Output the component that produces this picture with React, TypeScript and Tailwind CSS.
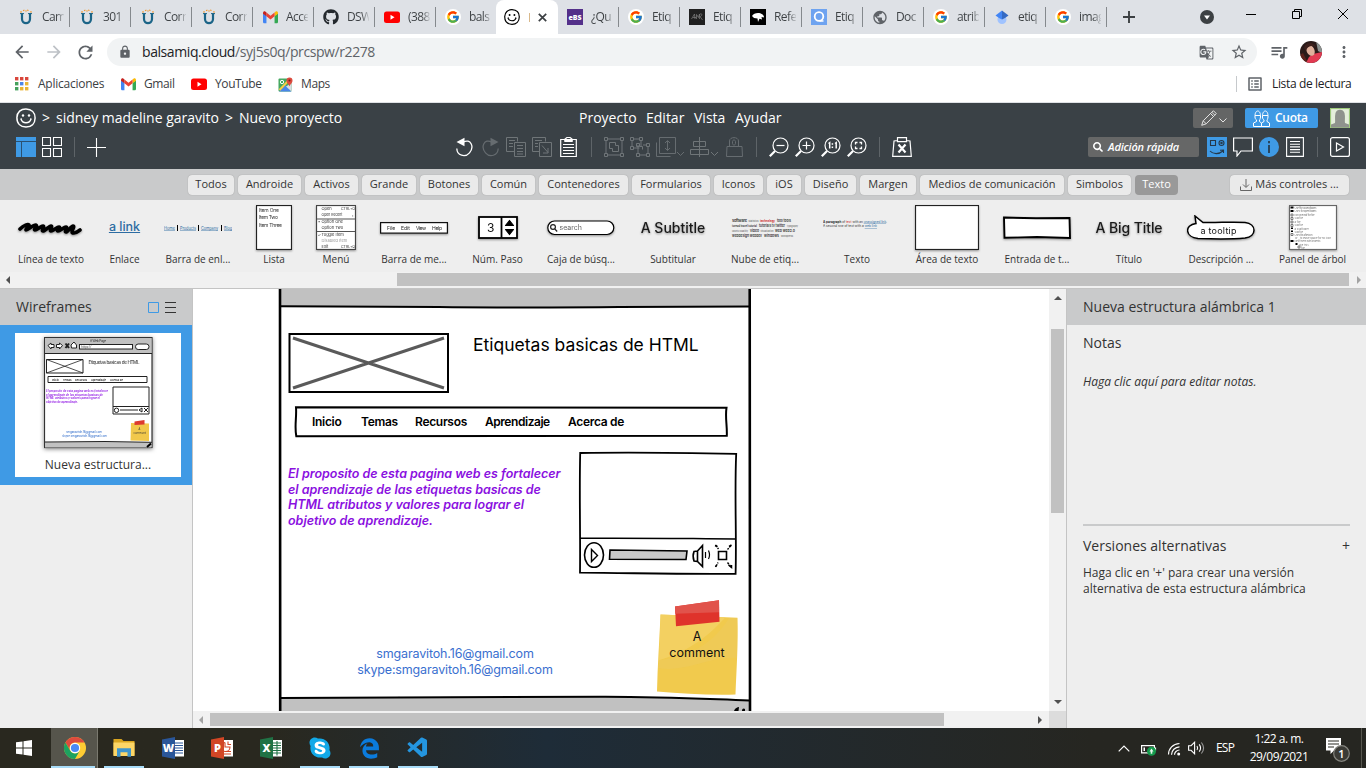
import type { ReactNode } from "react";
import { FaGithub, FaSkype, FaEdgeLegacy, FaSearch } from "react-icons/fa";
import { FcGoogle } from "react-icons/fc";
import {
  MdArrowBack,
  MdArrowForward,
  MdRefresh,
  MdLock,
  MdGTranslate,
  MdStarBorder,
  MdQueueMusic,
  MdMoreVert,
  MdOutlineListAlt,
  MdPublic,
} from "react-icons/md";
import { VscVscode } from "react-icons/vsc";

type IconProps = { w?: number; h?: number; box?: string; className?: string; children: ReactNode };

function Icon({ w = 16, h = 16, box, className = "", children }: IconProps) {
  return (
    <svg
      width={w}
      height={h}
      viewBox={box ?? `0 0 ${w} ${h}`}
      fill="none"
      stroke="currentColor"
      strokeWidth="1.2"
      className={`block shrink-0 ${className}`}
    >
      {children}
    </svg>
  );
}

/* ---------- Browser chrome ---------- */

const UIcon = () => (
  <Icon>
    <path d="M4 4.500v5.500c0 5.500 8 5.500 8 0V4.500" stroke="#1b6487" strokeWidth="2.200" />
    <path d="M2 4.600h4M10 4.600h4" stroke="#1b6487" strokeWidth="1" />
    <path d="M2.500 2.500l1 .8M5.500 .8l.5 1M10 .8l-.4 1M13.500 2.500l-1 .8M8 1.500v1" stroke="#f29527" strokeWidth="1.500" />
  </Icon>
);
const GmailIcon = () => (
  <Icon w={15} h={15} box="0 0 24 24" className="my-px">
    <g stroke="none">
      <path d="M0 5v14c0 1 .8 2 2 2h3.500V9L0 5z" fill="#4285f4" />
      <path d="M18.500 9v12H22c1.200 0 2-1 2-2V5l-5.500 4z" fill="#34a853" />
      <path d="M18.500 4v6L24 6V5c0-2.500-2.500-3.500-4-2.300L18.500 4z" fill="#fbbc04" />
      <path d="M5.500 10V4L12 9l6.500-5v6L12 15 5.500 10z" fill="#ea4335" />
      <path d="M0 5v1l5.500 4V4L4 2.700C2.500 1.500 0 2.500 0 5z" fill="#c5221f" />
    </g>
  </Icon>
);
const YouTubeIcon = () => (
  <Icon w={16} h={16}>
    <rect x="0" y="2.500" width="16" height="11.500" rx="2.500" fill="#f00" stroke="none" />
    <path d="M6.500 5.800v5l4-2.500z" fill="#fff" stroke="none" />
  </Icon>
);
const GoogleIcon = () => (
  <span className="flex size-4 items-center justify-center rounded-full bg-white">
    <FcGoogle size={14} />
  </span>
);
const Smile = ({ size = 16, className = "" }: { size?: number; className?: string }) => (
  <Icon w={size} h={size} box="0 0 20 20" className={className}>
    <path d="M10 .9C5 .8 1 4 .9 9.500.8 15.500 4.500 19 10 19.100c5.500 0 9-3.600 9.100-9.100C19.200 4.500 15.500 1.200 10 .9z" strokeWidth="1.500" />
    <path d="M5 11c1.500 5 8.500 5 10 0" strokeWidth="1.400" />
    <path d="M4.600 11.200l1-.6M14.400 10.600l1 .6" />
    <circle cx="7" cy="7.500" r="1.200" fill="currentColor" stroke="none" />
    <circle cx="13" cy="7.500" r="1.200" fill="currentColor" stroke="none" />
  </Icon>
);
const EbsIcon = () => (
  <span className="flex size-4 items-center justify-center bg-[#54308a] text-[7px] font-black leading-none text-white">eBS</span>
);
const DarkIcon = () => (
  <Icon>
    <rect width="16" height="16" fill="#202020" stroke="none" />
    <path d="M2.500 10l3-5 .5 5M4 8.500h3M7.500 10V5.500l2 3 1-3.500v5M11 5c3-1 2 2.500 0 2.500l2.500 3.500" stroke="#808080" strokeWidth=".7" />
  </Icon>
);
const DinoIcon = () => (
  <Icon>
    <rect width="16" height="16" fill="#000" stroke="none" />
    <path d="M2 7c1-2 3.500-3 6-3 3 0 6 1.500 6 4.500L11.500 8l.5 2.500-2.500-.8L8 13 7.500 9.500 4 9z" fill="#fff" stroke="none" />
  </Icon>
);
const QIcon = () => (
  <Icon>
    <rect width="16" height="16" fill="#6ea3f0" stroke="none" />
    <circle cx="8" cy="7.500" r="4.300" stroke="#fff" strokeWidth="1.800" />
    <path d="M8.500 12h4" stroke="#fff" strokeWidth="1.500" />
  </Icon>
);
const ScholarIcon = () => (
  <Icon>
    <circle cx="8" cy="10.500" r="4.500" fill="#a0c3ff" stroke="none" />
    <path d="M1.500 6.500L8 1.500v9L5 9z" fill="#4285f4" stroke="none" />
    <path d="M14.500 6.500L8 1.500v9L11 9z" fill="#356ac3" stroke="none" />
  </Icon>
);

const leftTabs: [ReactNode, string][] = [
  [<UIcon />, "Cam"],
  [<UIcon />, "301"],
  [<UIcon />, "Corr"],
  [<UIcon />, "Corr"],
  [<GmailIcon />, "Acce"],
  [<FaGithub size={16} color="#24292e" />, "DSW"],
  [<YouTubeIcon />, "(388"],
  [<GoogleIcon />, "bals"],
];
const rightTabs: [ReactNode, string][] = [
  [<EbsIcon />, "¿Qu"],
  [<GoogleIcon />, "Etiq"],
  [<DarkIcon />, "Etiq"],
  [<DinoIcon />, "Refe"],
  [<QIcon />, "Etiq"],
  [<MdPublic size={17} color="#5f6368" />, "Doc"],
  [<GoogleIcon />, "atrib"],
  [<ScholarIcon />, "etiq"],
  [<GoogleIcon />, "imag"],
];

function Tab({ icon, label, last = false }: { icon: ReactNode; label: string; last?: boolean }) {
  return (
    <div className="flex h-full w-[61px] shrink-0 items-center pl-[9px]">
      <span className="flex w-4 shrink-0 justify-center">{icon}</span>
      <span className="ml-2 w-[22px] overflow-hidden whitespace-nowrap bg-linear-to-r from-[#3c4043] from-65% to-[#3c404320] bg-clip-text text-[12px] tracking-[-0.6px] text-transparent">
        {label}
      </span>
      {!last && <span className="ml-auto h-5 w-px bg-[#85898d]" />}
    </div>
  );
}

function TabStrip() {
  return (
    <div className="flex h-[34px] items-center bg-[#dee1e6] pl-[9px]">
      {leftTabs.map(([icon, label], i) => (
        <Tab key={i} icon={icon} label={label} last={i === 7} />
      ))}
      <div className="-ml-px flex h-full w-[62px] shrink-0 items-center rounded-t-lg bg-white pl-2 text-black">
        <Smile size={16} />
        <span className="ml-[9px] h-[9px] w-px bg-[#d9b98c]" />
        <Icon w={9} h={9} className="ml-2 text-[#3c4043]">
          <path d="M.8.8l7.400 7.400M8.200.8L.8 8.200" strokeWidth="1.700" />
        </Icon>
      </div>
      {rightTabs.map(([icon, label], i) => (
        <Tab key={i} icon={icon} label={label} />
      ))}
      <Icon w={12} h={12} className="ml-[16px] text-[#3c4043]">
        <path d="M6 0v12M0 6h12" strokeWidth="1.900" />
      </Icon>
      <Icon w={14} h={14} className="ml-[65px]">
        <circle cx="7" cy="7" r="7" fill="#3c4043" stroke="none" />
        <path d="M4 5.500h6L7 9.500z" fill="#fff" stroke="none" />
      </Icon>
      <Icon w={10} h={10} className="-mt-1.5 ml-[32px] text-black">
        <path d="M0 5.500h10" strokeWidth="1" />
      </Icon>
      <Icon w={10} h={10} className="-mt-1.5 ml-[36px] text-black">
        <path d="M.5 2.500h7v7h-7zM2.500 2.500V.5h7v7h-2" strokeWidth="1" />
      </Icon>
      <Icon w={10} h={10} className="-mt-1.5 ml-[36px] text-black">
        <path d="M0 0l10 10M10 0L0 10" strokeWidth="1" />
      </Icon>
    </div>
  );
}

function AddressBar() {
  return (
    <div className="flex h-9 items-center bg-white text-[#5f6368]">
      <MdArrowBack size={20} className="ml-3" />
      <MdArrowForward size={20} className="ml-3 text-[#bdc1c6]" />
      <MdRefresh size={21} className="ml-[11px]" />
      <div className="ml-[11px] flex h-7 w-[1150px] items-center rounded-full bg-[#f1f3f4]">
        <MdLock size={14} className="ml-[11px]" />
        <span className="mb-0.5 ml-[10px] text-[14px] tracking-[-0.42px]">
          <span className="text-[#202124]">balsamiq.cloud</span>/syj5s0q/prcspw/r2278
        </span>
        <MdGTranslate size={15} className="ml-auto" />
        <MdStarBorder size={18} className="ml-4 mr-[9px]" />
      </div>
      <MdQueueMusic size={20} className="ml-3" />
      <Icon w={22} h={22} className="ml-[11px]">
        <defs>
          <clipPath id="avatar">
            <circle cx="11" cy="11" r="11" />
          </clipPath>
        </defs>
        <g clipPath="url(#avatar)" stroke="none">
          <rect width="22" height="22" fill="#2a1a19" />
          <path d="M16 0h6v12l-4-2z" fill="#8c9391" />
          <path d="M0 14l3-2 5 10H0z" fill="#5b221c" />
          <path d="M9 16l4-3 9-2v11H6z" fill="#e23a52" />
          <ellipse cx="10.500" cy="9.500" rx="3.900" ry="5.600" fill="#e0b09c" transform="rotate(-25 10.500 9.500)" />
          <path d="M4 7c1-6 9-7 12-1-4-2-9-1-10 4z" fill="#3d211d" />
        </g>
      </Icon>
      <MdMoreVert size={18} className="ml-[13px]" />
    </div>
  );
}

function Bookmarks() {
  const colors = ["#d9473c", "#d9473c", "#d9473c", "#45a05c", "#4c85e8", "#eab434", "#45a05c", "#eab434", "#eab434"];
  return (
    <div className="flex h-[33px] items-start border-b border-[#dfe1e5] bg-white pt-[5px] text-[12px] text-[#3c4043]">
      <div className="flex h-[18px] w-full items-center">
        <Icon w={14} h={14} className="ml-[15px]">
          {colors.map((c, i) => (
            <rect key={i} x={(i % 3) * 5} y={Math.floor(i / 3) * 5} width="3.400" height="3.400" fill={c} stroke="none" />
          ))}
        </Icon>
        <span className="ml-[9px] w-[66px] tracking-[-0.25px]">Aplicaciones</span>
        <span className="ml-[17px]"><GmailIcon /></span>
        <span className="ml-[8px] w-[31px] tracking-[-0.4px]">Gmail</span>
        <span className="ml-4"><YouTubeIcon /></span>
        <span className="ml-2 w-[46px] tracking-[-0.4px]">YouTube</span>
        <Icon w={15} h={15} className="ml-[17px]">
          <rect x=".5" y="1.500" width="13" height="13" rx="1" fill="#45a860" stroke="none" />
          <path d="M1 14.500L7.500 8l6 6.500z" fill="#4a86e8" stroke="none" />
          <path d="M12 2L1.500 13" stroke="#f6ce46" strokeWidth="2" />
          <path d="M8 9.500l5.500 5V6z" fill="#d9dee3" stroke="none" />
          <circle cx="4" cy="5" r="1.700" stroke="#fff" strokeWidth="1" />
          <path d="M11.500 9.500C11 7 8.500 6.500 8.500 3.500a3 3 0 016 0c0 3-2.500 3.500-3 6z" fill="#dd4b3e" stroke="none" />
          <circle cx="11.500" cy="3.500" r="1" fill="#7b1f18" stroke="none" />
        </Icon>
        <span className="ml-2 tracking-[-0.4px]">Maps</span>
        <span className="ml-auto h-4 w-px bg-[#c6c9cc]" />
        <MdOutlineListAlt size={18} className="ml-[9px] text-[#5f6368]" />
        <span className="ml-[8px] mr-[15px] w-[79px] whitespace-nowrap tracking-[-0.35px] text-[#202124]">Lista de lectura</span>
      </div>
    </div>
  );
}

/* ---------- Balsamiq header ---------- */

const Sep = ({ className = "" }: { className?: string }) => <span className={`h-5 w-px shrink-0 bg-[#5e6468] ${className}`} />;

const Magnifier = ({ children, className }: { children: ReactNode; className: string }) => (
  <Icon w={20} h={20} className={className}>
    <circle cx="11.500" cy="8.500" r="7.500" strokeWidth="1.200" />
    <path d="M6 14L.8 19.200" strokeWidth="2.200" />
    {children}
  </Icon>
);

function AppHeader() {
  return (
    <div className="flex h-[66px] flex-col bg-[#3a4146] text-[14px] text-white">
      <div className="flex h-[30px] items-center">
        <Smile size={20} className="ml-4" />
        <div className="-mt-0.5 flex whitespace-nowrap">
          <span className="ml-[6px] w-2">&gt;</span>
          <span className="ml-[6px] w-[163px]">sidney madeline garavito</span>
          <span className="ml-[6px] w-2">&gt;</span>
          <span className="ml-[6px] w-[103px] tracking-[-0.05px]">Nuevo proyecto</span>
          <span className="ml-[237px] w-[57px]">Proyecto</span>
          <span className="ml-[10px] w-[38px]">Editar</span>
          <span className="ml-[10px] w-[31px]">Vista</span>
          <span className="ml-[10px] w-[47px]">Ayudar</span>
        </div>
        <div className="ml-auto flex h-5 w-10 items-center rounded-xs bg-[#646565] pl-2 text-[#e4e4e4]">
          <Icon w={16} h={16}>
            <path d="M.7 15.300l1.500-4.500L10.800 2.200l3 3L5.200 13.800zM2.200 10.800l3 3M9.500 3.500l3 3M10.800 2.200L12.500.8 15.200 3.500l-1.400 1.700" strokeWidth="1" />
          </Icon>
          <Icon w={8} h={5} className="ml-[2px] mt-1">
            <path d="M.5.5L4 4 7.500.5" strokeWidth="1" />
          </Icon>
        </div>
        <div className="ml-3 flex h-5 w-[73px] items-center rounded-xs bg-[#3f9ae5] pl-2 text-[12px] font-semibold">
          <Icon w={17} h={17}>
            <g strokeWidth="1">
              <path d="M2 7c-.5-8 6-8 5.500 0-.3 2-.5 2.500-1 3M2 7c0 1.500.7 2.500 1.500 3v1.500L.5 13v3.500h8V13l-2-1.500V10M2 5.500h5.500" />
              <path d="M9.500 7c-.5-8 6-8 5.500 0-.3 2-.5 2.500-1 3M9.500 7c0 1.500.7 2.500 1.500 3v1.500L8.500 13v3.500h8V13l-2.500-1.500V10M9.500 5.500H15" />
            </g>
          </Icon>
          <span className="ml-[5px] tracking-[-0.3px]">Cuota</span>
        </div>
        <Icon w={20} h={20} className="ml-3 mr-4">
          <rect x=".5" y=".5" width="19" height="19" fill="#e5eedb" stroke="#9dc97a" />
          <path d="M5 15c.5-2-.5-6 .5-10 1-4.500 8-4.500 9 0 1 4 0 8 .5 10l4 1.500v3H1v-3z" fill="#8f928d" stroke="none" />
        </Icon>
      </div>
      <div className="flex h-7 items-center">
        <Icon w={20} h={20} className="ml-4">
          <rect width="20" height="20" fill="#3f9ae5" stroke="none" />
          <path d="M0 4.500h20M5.500 5v15" stroke="#2a5172" strokeWidth="1" />
        </Icon>
        <Icon w={20} h={20} className="ml-[6px]">
          <path d="M.5.500h8v8h-8zM11.500.5h8v8h-8zM.5 11.500h8v8h-8zM11.500 11.500h8v8h-8z" strokeWidth="1.100" />
        </Icon>
        <Sep className="ml-3" />
        <Icon w={19} h={19} className="ml-3">
          <path d="M9.500 0v19M0 9.500h19" strokeWidth="1.100" />
        </Icon>
        <Icon w={17} h={20} className="ml-[350px]">
          <path d="M7 5.200C15 .8 18.500 10 13.500 15.800 9 21 1 18.500.8 11.500" strokeWidth="1.300" />
          <path d="M.5 5L8.500.8v8.400z" fill="currentColor" stroke="none" />
        </Icon>
        <Icon w={17} h={20} className="ml-[9px] text-[#666c70]">
          <path d="M10 5.200C2 .8-1.500 10 3.500 15.800 8 21 16 18.500 16.200 11.500" strokeWidth="1.200" />
          <path d="M16.500 5L8.500.8v8.400z" fill="currentColor" stroke="none" />
        </Icon>
        <Icon w={20} h={20} className="ml-[7px] text-[#6f7578]">
          <path d="M8 14.500H.5V.5h11v4M8.500 5.500h11v14h-11zM3 3.500h6M3 6.500h4M3 9.500h4M11 8.500h6M11 11.500h6M11 14.500h6M11 17h6" strokeWidth="1" />
        </Icon>
        <Icon w={20} h={20} className="ml-[6px] text-[#6f7578]">
          <path d="M7 14.500H.5V.5h13v4M7.500 5.500h12v14h-12zM3 3.500h7M3 6.500h3M3 9.500h3M10 8.500l6 7M16 11v5h-5" strokeWidth="1" />
        </Icon>
        <Icon w={17} h={20} className="ml-[8px]">
          <path d="M5 2.500H.7v17h15.600v-17H12M5 4V2l2-1.500h3L12 2v2zM3 7.500h11M3 10.500h11M3 13.500h11M3 16.500h11" strokeWidth="1.200" />
          <path d="M5 2.500h7v2H5z" fill="currentColor" />
        </Icon>
        <Sep className="ml-[14px]" />
        <Icon w={20} h={20} className="ml-3 text-[#6f7578]">
          <path d="M.5.500h3v3h-3zM16.500.5h3v3h-3zM.5 16.500h3v3h-3zM16.500 16.500h3v3h-3zM4 2h12M4 18h12M2 4v12M18 4v12M5.500 5.500h6v3h3v6h-6v-3h-3z" strokeWidth="1" />
        </Icon>
        <Icon w={20} h={20} className="ml-[6px] text-[#6f7578]">
          <path d="M.5.500h3v3h-3zM9.500.5h3v3h-3zM.5 9.500h3v3h-3zM9.500 9.500h3v3M16.500 6.500h3v3h-3zM6.500 16.500h3v3h-3zM16.500 16.500h3v3h-3zM4 2h5.500M2 4v5.500M11 4v5.500M4 11h5.500M13 8h3.500M8 8v8.500M10 18h6.500M18 10v6.500M6.500 6.500h3v3h-3z" strokeWidth="1" />
        </Icon>
        <Icon w={28} h={20} className="ml-[6px] text-[#666c70]">
          <path d="M3.500.5h16v16h-16zM.5 5.500v14h14M11.500 4v9.500M9 6l2.500-2.500L14 6M9 11l2.500 2.500L14 11M21 15l3.500 3.500L28 15" strokeWidth="1" />
        </Icon>
        <Icon w={28} h={20} className="ml-[6px] text-[#6f7578]">
          <path d="M9.500 0v20M3.500 4.500h12v5h-12zM.5 12.500h18v5H.5zM21 15l3.500 3.500L28 15" strokeWidth="1" />
        </Icon>
        <Icon w={17} h={20} className="ml-[8px] text-[#666c70]">
          <path d="M1 9.500h15l.5 10H.5zM3.500 9V4c0-4.500 9-4.500 9 0v5M6.500 4.500c0-2 3-2 3 0v2c0 2-3 2-3 0z" strokeWidth="1" />
        </Icon>
        <Sep className="ml-[13px]" />
        <Magnifier className="ml-3"><path d="M7.500 8.500h8" /></Magnifier>
        <Magnifier className="ml-[6px]"><path d="M7.500 8.500h8M11.500 4.500v8" /></Magnifier>
        <Magnifier className="ml-[6px]">
          <path d="M7.500 6.500l1.200-.8v5.800M14 6.500l1.200-.8v5.800M11.400 6.300v1.500M11.400 9.500V11" strokeWidth="1.500" />
        </Magnifier>
        <Magnifier className="ml-[6px]">
          <path d="M8.500 7.500v-2h2M12.500 5.500h2v2M14.500 9.500v2h-2M10.500 11.500h-2v-2" strokeWidth="1.300" />
        </Magnifier>
        <Sep className="ml-3" />
        <Icon w={20} h={20} className="ml-3">
          <path d="M5.500 3.500L2 4 .7 19.300h18.600L18 4l-3.500-.5M5.500.7h9v4h-9z" strokeWidth="1.200" />
          <path d="M6.500 7.500l7 8M13.500 7.500l-7 8" strokeWidth="2.200" />
        </Icon>
        <div className="ml-auto flex h-5 w-[111px] items-center rounded-xs bg-[#666767] pl-[5px] text-[11px] font-semibold italic">
          <FaSearch size={10} />
          <span className="ml-[5px] whitespace-nowrap tracking-[-0.15px]">Adición rápida</span>
        </div>
        <Icon w={20} h={20} className="ml-2">
          <rect width="20" height="20" fill="#3f9ae5" stroke="none" />
          <g stroke="#25384a" strokeWidth="1.100">
            <path d="M3.500 3.500h5v5h-5zM3 14c3 3.500 9 3.500 13 0M13 13.200l3.500-.2v3" />
            <circle cx="14.500" cy="6" r="2.500" />
            <circle cx="14.500" cy="6" r=".7" />
          </g>
        </Icon>
        <Icon w={20} h={20} className="ml-[6px]">
          <path d="M.6 1h18.800v13H8l-4 5v-5H.6z" />
        </Icon>
        <Icon w={20} h={20} className="ml-[6px]">
          <circle cx="10" cy="10" r="10" fill="#3f9ae5" stroke="none" />
          <path d="M10 8v8M10 4v2.200" stroke="#263c50" strokeWidth="1.800" />
        </Icon>
        <Icon w={18} h={20} className="ml-[7px]">
          <path d="M.6.600h16.800v18.800H.6zM4 4.500h10M4 7.200h10M4 9.900h10M4 12.600h10M4 15.300h10" strokeWidth="1.100" />
        </Icon>
        <Sep className="ml-[13px]" />
        <Icon w={20} h={20} className="ml-3 mr-4">
          <rect x=".6" y=".6" width="18.800" height="18.800" rx="2" />
          <path d="M6.500 6v8l7-4z" />
        </Icon>
      </div>
    </div>
  );
}

/* ---------- Control library ---------- */

const categories: [string, string][] = [
  ["Todos", "w-[46px]"],
  ["Androide", "w-[63px]"],
  ["Activos", "w-[53px]"],
  ["Grande", "w-[54px]"],
  ["Botones", "w-[58px]"],
  ["Común", "w-[53px]"],
  ["Contenedores", "w-[89px]"],
  ["Formularios", "w-[78px]"],
  ["Iconos", "w-[49px]"],
  ["iOS", "w-[34px]"],
  ["Diseño", "w-[51px]"],
  ["Margen", "w-[56px]"],
  ["Medios de comunicación", "w-[144px]"],
  ["Simbolos", "w-[63px]"],
  ["Texto", "w-[43px]"],
];

function Categories() {
  return (
    <div className="flex h-[31px] items-center gap-1 bg-[#c9cacb] pl-[188px] text-[11px] text-[#333]">
      {categories.map(([label, w]) => (
        <span
          key={label}
          className={`flex h-5 shrink-0 items-center justify-center whitespace-nowrap rounded-[4px] ${w} ${
            label === "Texto" ? "bg-[#999] text-white" : "bg-[#eaeaea] shadow-[0_0_1px_#888]"
          }`}
        >
          {label}
        </span>
      ))}
      <span className="ml-auto mr-[17px] flex h-5 w-[119px] items-center justify-center rounded-[4px] bg-[#eaeaea] shadow-[0_0_1px_#888]">
        <Icon w={12} h={12} className="mr-[3px] text-[#666]">
          <path d="M.5 7.500v4h11v-4M6 0v8M3 5.500l3 3 3-3" strokeWidth="1" />
        </Icon>
        Más controles ...
      </span>
    </div>
  );
}

const shadow = "drop-shadow-[0_1px_1px_rgba(0,0,0,0.4)]";
const sketch = "Inter, sans-serif";

const controls: { label: string; w: string; art: ReactNode }[] = [
  {
    label: "Línea de texto",
    w: "w-[68px]",
    art: (
      <Icon w={68} h={14} className={shadow}>
        <path
          d="M3 8c4-4 8-5 9-4s-4 4-3 5 8-6 10-5-3 5-1 5 6-4 8-4-2 5 0 5 6-5 8-5-2 5 0 5 6-4 8-4-3 4-1 4 6-4 8-4-2 5 0 5 5-6 7-6-1 4-1 6 4 1 8-2"
          stroke="#000"
          strokeWidth="3.600"
          strokeLinejoin="round"
          strokeLinecap="round"
        />
      </Icon>
    ),
  },
  { label: "Enlace", w: "w-[31px]", art: <span className="whitespace-nowrap font-['Inter'] text-[12.5px] font-medium text-[#2d6ca2] underline">a link</span> },
  {
    label: "Barra de enl...",
    w: "w-[68px]",
    art: (
      <Icon w={68} h={8}>
        <path d="M13.500 1v6M34.500 1v6M57.500 1v6" stroke="#000" strokeWidth="1" />
        <g fill="#2d6ca2" stroke="none" fontSize="4.500" fontFamily={sketch} textDecoration="underline">
          <text x="0" y="5.500" textLength="11" lengthAdjust="spacingAndGlyphs">Home</text>
          <text x="16" y="5.500" textLength="16" lengthAdjust="spacingAndGlyphs">Products</text>
          <text x="37" y="5.500" textLength="17" lengthAdjust="spacingAndGlyphs">Company</text>
          <text x="60" y="5.500" textLength="8" lengthAdjust="spacingAndGlyphs">Blog</text>
        </g>
      </Icon>
    ),
  },
  {
    label: "Lista",
    w: "w-[36px]",
    art: (
      <Icon w={36} h={45} className={shadow}>
        <rect x=".5" y=".5" width="35" height="44" fill="#fff" stroke="#222" />
        <g fill="#333" stroke="none" fontSize="5" fontFamily={sketch}>
          <text x="3" y="6.500" textLength="20">Item One</text>
          <text x="3" y="14" textLength="19">Item Two</text>
          <text x="3" y="21.500" textLength="23">Item Three</text>
        </g>
      </Icon>
    ),
  },
  {
    label: "Menú",
    w: "w-[40px]",
    art: (
      <Icon w={40} h={45} className={shadow}>
        <rect x=".5" y=".5" width="39" height="44" fill="#fff" stroke="#444" />
        <path d="M1 14h38M1 26.500h38" stroke="#555" />
        <g fill="#333" stroke="none" fontSize="4" fontFamily={sketch}>
          <text x="5.500" y="5.300">Open</text>
          <text x="25" y="5.300" textLength="14" lengthAdjust="spacingAndGlyphs">CTRL+O</text>
          <text x="5.500" y="11.300" textLength="21" lengthAdjust="spacingAndGlyphs">Open Recent</text>
          <text x="36" y="11.500">›</text>
          <text x="2" y="18">•</text>
          <text x="5.500" y="18">Option One</text>
          <text x="5.500" y="24">Option Two</text>
          <text x="1.500" y="31">✓</text>
          <text x="5.500" y="31">Toggle Item</text>
          <text x="5.500" y="36.800" fill="#999">Disabled Item</text>
          <text x="5.500" y="42.500">Exit</text>
          <text x="25" y="42.500" textLength="14" lengthAdjust="spacingAndGlyphs">CTRL+Q</text>
        </g>
      </Icon>
    ),
  },
  {
    label: "Barra de me...",
    w: "w-[68px]",
    art: (
      <Icon w={68} h={12} className={shadow}>
        <rect x=".6" y=".6" width="66.800" height="10.500" fill="#fff" stroke="#111" />
        <g fill="#222" stroke="none" fontSize="5" fontFamily={sketch}>
          <text x="7" y="7.500">File</text>
          <text x="21" y="7.500">Edit</text>
          <text x="36" y="7.500" textLength="10">View</text>
          <text x="52" y="7.500" textLength="10">Help</text>
        </g>
      </Icon>
    ),
  },
  {
    label: "Núm. Paso",
    w: "w-[51px]",
    art: (
      <Icon w={40} h={24} className={shadow}>
        <rect x="1" y="1" width="38" height="21" fill="#fff" stroke="#000" strokeWidth="1.800" />
        <path d="M23.500 1v21" stroke="#000" strokeWidth="1.800" />
        <path d="M31.500 4.500l4 5h-8zM31.500 18.500l4-5h-8z" fill="#000" stroke="#000" strokeLinejoin="round" />
        <text x="9" y="15.500" fontSize="12" fill="#111" stroke="none" fontFamily={sketch}>3</text>
      </Icon>
    ),
  },
  {
    label: "Caja de búsq...",
    w: "w-[68px]",
    art: (
      <Icon w={68} h={16} className={shadow}>
        <rect x=".8" y="1" width="66" height="13.500" rx="6.700" fill="#fff" stroke="#000" />
        <circle cx="6" cy="7" r="2.400" stroke="#222" />
        <path d="M7.800 9l2.400 2.500" stroke="#222" />
        <text x="12.500" y="10" fontSize="7" fill="#666" stroke="none" fontFamily={sketch}>search</text>
      </Icon>
    ),
  },
  { label: "Subtitular", w: "w-[68px]", art: <span className={`whitespace-nowrap font-['Inter'] text-[14px] font-medium text-[#1a1a1a] ${shadow}`}>A Subtitle</span> },
  {
    label: "Nube de etiq...",
    w: "w-[68px]",
    art: (
      <Icon w={68} h={22} box="0 0 68 22">
        <g fill="#333" stroke="none" fontSize="4" fontFamily={sketch} fontWeight="600">
          <text x="1" y="4.500" textLength="15">software</text>
          <text x="17.500" y="4.500" textLength="10" lengthAdjust="spacingAndGlyphs" fontSize="2.500" fill="#777">statistics</text>
          <text x="29" y="4.500" textLength="15" lengthAdjust="spacingAndGlyphs" fill="#c22" fontSize="3.500">technology</text>
          <text x="46" y="4.500" textLength="14" lengthAdjust="spacingAndGlyphs">tool tools</text>
          <text x="1" y="9.500" textLength="25" lengthAdjust="spacingAndGlyphs" fontSize="3.200">toread travel tutorial</text>
          <text x="28" y="9.500" textLength="26" lengthAdjust="spacingAndGlyphs">tutorials tv twitter</text>
          <text x="56" y="9.500" textLength="11" lengthAdjust="spacingAndGlyphs" fontSize="2.500" fill="#777">typography</text>
          <text x="1" y="14.500" textLength="16" lengthAdjust="spacingAndGlyphs" fontSize="2.600" fill="#777">ubuntu usability</text>
          <text x="19" y="14.500" textLength="9" lengthAdjust="spacingAndGlyphs">video</text>
          <text x="29.500" y="14.500" textLength="13" lengthAdjust="spacingAndGlyphs" fontSize="2.600" fill="#777">visualization</text>
          <text x="44" y="14.500" textLength="20" lengthAdjust="spacingAndGlyphs">web web2.0</text>
          <text x="1" y="19.500" textLength="30" lengthAdjust="spacingAndGlyphs">webdesign webdev</text>
          <text x="33" y="19.500" textLength="15" lengthAdjust="spacingAndGlyphs">windows</text>
          <text x="50" y="19.500" textLength="12" lengthAdjust="spacingAndGlyphs" fontSize="2.600" fill="#777">wordpress</text>
        </g>
      </Icon>
    ),
  },
  {
    label: "Texto",
    w: "w-[68px]",
    art: (
      <Icon w={68} h={24} box="0 0 68 24">
        <g fill="#333" stroke="none" fontSize="3.600" fontFamily={sketch}>
          <text x="0" y="6.500" textLength="64" lengthAdjust="spacingAndGlyphs">
            <tspan fontWeight="700">A paragraph</tspan> of <tspan fill="#c22">text</tspan> with an{" "}
            <tspan fill="#2d6ca2" textDecoration="underline">unassigned link</tspan>.
          </text>
          <text x="0" y="11" textLength="54" lengthAdjust="spacingAndGlyphs">
            A <tspan fontStyle="italic">second row</tspan> of text with a <tspan fill="#2d6ca2" textDecoration="underline">web link</tspan>
          </text>
        </g>
      </Icon>
    ),
  },
  {
    label: "Área de texto",
    w: "w-[64px]",
    art: (
      <Icon w={64} h={45} className={shadow}>
        <rect x=".5" y=".5" width="63" height="44" fill="#fff" stroke="#222" />
      </Icon>
    ),
  },
  {
    label: "Entrada de t...",
    w: "w-[68px]",
    art: (
      <Icon w={68} h={24} className={shadow}>
        <path d="M1 1.500l32 .8 33.500-.3.500 20-33-1-32.500.8z" fill="#fff" stroke="#000" strokeWidth="1.900" />
      </Icon>
    ),
  },
  { label: "Título", w: "w-[68px]", art: <span className={`whitespace-nowrap font-['Inter'] text-[14px] font-medium tracking-[-0.1px] text-[#1a1a1a] ${shadow}`}>A Big Title</span> },
  {
    label: "Descripción ...",
    w: "w-[68px]",
    art: (
      <Icon w={68} h={26} className={shadow}>
        <path d="M8 1l8 6.500c15 .5 28-1 42 0 12 1.500 12 14 0 15.500-15 1.500-32 1-47 .5C-2 22-3 10 9 8.500z" fill="#fff" stroke="#000" strokeWidth="1.500" />
        <text x="13.500" y="18.500" fontSize="9" fill="#111" stroke="none" fontFamily={sketch} textLength="36">a tooltip</text>
      </Icon>
    ),
  },
  {
    label: "Panel de árbol",
    w: "w-[67px]",
    art: (
      <Icon w={48} h={45} className={shadow}>
        <rect x=".5" y=".5" width="47" height="44" fill="#fff" stroke="#666" />
        <g fill="#777" stroke="none" fontSize="2.700" fontFamily={sketch}>
          <path d="M1.500 1.500h3v2h-3zM1.500 5h3v2h-3zM1.500 35h3v2h-3zM6.500 38h2v2h-2z" fill="#000" />
          <path d="M2 9h2v2H2zM2 12.500h2v2H2zM2 16h2v2H2zM2 19.500h2v2H2zM2 28.500h2v2H2zM9 41h2v2H9z" fill="#fff" stroke="#333" strokeWidth=".6" />
          <path d="M2 22.500h2v1.500H2zM2 25.500h2v1.500H2z" fill="#000" />
          <text x="5.500" y="3.500" textLength="22">Use f for closed folders</text>
          <text x="5.500" y="7" textLength="22">Use F for open folders</text>
          <text x="5.500" y="10.500" textLength="20">For lone leaf for file</text>
          <text x="5.500" y="14">subfile</text>
          <text x="5.500" y="17.500">a file</text>
          <text x="5.500" y="21">subfile</text>
          <text x="5.500" y="24.500">a subfolder</text>
          <text x="5.500" y="27.500">subfile</text>
          <text x="5.500" y="30.500" textLength="18">Use x for a file icon</text>
          <text x="6" y="34" textLength="36">or _ to leave space for no icon</text>
          <text x="5.500" y="37" textLength="26">Nest them with indents</text>
          <text x="10" y="40.500">like this</text>
          <text x="12" y="43.500">file</text>
        </g>
      </Icon>
    ),
  },
];

function Controls() {
  return (
    <div className="flex h-[72px] gap-6 bg-[#eee] pl-[17px]">
      {controls.map((c) => (
        <div key={c.label} className={`flex shrink-0 flex-col items-center ${c.w}`}>
          <div className="mt-[5px] flex h-[45px] items-center">{c.art}</div>
          <span className="mt-px whitespace-nowrap text-[10px] leading-4 text-[#333]">{c.label}</span>
        </div>
      ))}
    </div>
  );
}

const Arrow = ({ d, className = "" }: { d: string; className?: string }) => (
  <Icon w={8} h={8} className={className}>
    <path d={d} fill="currentColor" stroke="none" />
  </Icon>
);
const LEFT = "M6 0v8L2 4z";
const RIGHT = "M2 0v8l4-4z";
const UP = "M0 6h8L4 2z";
const DOWN = "M0 2h8L4 6z";

/* ---------- Panels ---------- */

function Thumbnail() {
  return (
    <Icon w={109} h={112} className="drop-shadow-[0_1px_2px_rgba(0,0,0,0.5)]">
      <rect x=".5" y=".5" width="107.500" height="110" fill="#fff" stroke="#333" />
      <path d="M1 1h106.500v15.500H1zM1 105h106.500v5.500H1z" fill="#c1c1c1" stroke="none" />
      <path d="M1 16.500h107M1 105l60-.5 47 .8" stroke="#222" strokeWidth="1" />
      <text x="46" y="4.800" fontSize="3.200" fill="#333" stroke="none" fontFamily={sketch} textLength="16">A Web Page</text>
      <g stroke="#222" fill="#fff" strokeWidth="1">
        <path d="M4 8.500l3-2.500v1.500h3v3H7V12zM18.500 8.500l-3-2.500v1.500h-3v3h3V12zM27 8l3-3 2.500 3v3h-5z" />
        <path d="M21.500 6.500l3.500 4.500M25 6.500l-3.500 4.500" strokeWidth="2" />
        <rect x="35.500" y="7.500" width="53" height="4.500" />
        <rect x="91.500" y="7" width="13.500" height="5.500" rx="2.700" />
        <path d="M2.500 22.500h36.500v13.500H2.500zM4 39.500h99v6H4zM69 50h36v27H69zM69 69.500h36" />
        <path d="M2.500 22.500L39 36M39 22.500L2.500 36" strokeWidth=".8" />
        <circle cx="72.500" cy="73.300" r="2.200" />
        <path d="M76 73h18M95 73l3-2v4zM100 71l4 4M104 71l-4 4" />
      </g>
      <text x="37" y="10.800" fontSize="3" fill="#333" stroke="none">https://</text>
      <text x="44.500" y="27" fontSize="4.600" fill="#222" stroke="none" fontFamily={sketch} textLength="51">Etiquetas basicas de HTML</text>
      <g fontSize="2.700" fontWeight="700" fill="#333" stroke="none" fontFamily={sketch}>
        <text x="8" y="43.500" textLength="7">Inicio</text>
        <text x="19" y="43.500" textLength="8.500">Temas</text>
        <text x="31" y="43.500" textLength="12">Recursos</text>
        <text x="47" y="43.500" textLength="15">Aprendizaje</text>
        <text x="66" y="43.500" textLength="13">Acerca de</text>
      </g>
      <g fontSize="2.800" fontWeight="700" fontStyle="italic" fill="#9a2be6" stroke="none" fontFamily={sketch}>
        <text x="2" y="55" textLength="62">El proposito de esta pagina web es fortalecer</text>
        <text x="2" y="58.600" textLength="57">el aprendizaje de las etiquetas basicas de</text>
        <text x="2" y="62.200" textLength="54">HTML atributos y valores para lograr el</text>
        <text x="2" y="65.800" textLength="32">objetivo de aprendizaje.</text>
      </g>
      <g fontSize="2.900" fill="#2a68c8" stroke="none" fontFamily={sketch}>
        <text x="22" y="96" textLength="36">smgaravitoh.16@gmail.com</text>
        <text x="18" y="99.500" textLength="45">skype:smgaravitoh.16@gmail.com</text>
      </g>
      <path d="M87 86l18 .5v17.500l-18.500-.5z" fill="#f1c84b" stroke="none" />
      <path d="M90.500 84.500l10-1.500v4.500l-10 .5z" fill="#dd3a2f" stroke="none" />
      <text x="94.500" y="92.500" fontSize="2.800" fill="#333" stroke="none">A</text>
      <text x="89.500" y="96.500" fontSize="2.800" fill="#333" stroke="none">comment</text>
      <path d="M103 110l4-3.500" stroke="#000" strokeWidth="2" />
    </Icon>
  );
}

function Sidebar() {
  return (
    <div className="flex w-[193px] shrink-0 flex-col border-r border-[#c4c4c4] bg-[#eee]">
      <div className="flex h-9 items-center bg-[#c9cacb] text-[#333]">
        <span className="mb-0.5 ml-4 text-[14px]">Wireframes</span>
        <Icon w={11} h={11} className="ml-auto text-[#3f9ae5]">
          <path d="M.5.500h10v10H.5z" strokeWidth="1" />
        </Icon>
        <Icon w={11} h={11} className="ml-[6px] mr-4">
          <path d="M0 .5h11M0 5.500h11M0 10.500h11" strokeWidth="1.100" />
        </Icon>
      </div>
      <div className="h-[160px] bg-[#3f9ae5] pl-[15px] pt-2">
        <div className="flex h-36 w-[166px] flex-col items-center bg-white pt-1">
          <Thumbnail />
          <span className="mt-[6px] text-[12px] leading-5 text-[#333]">Nueva estructura...</span>
        </div>
      </div>
    </div>
  );
}

function Wireframe() {
  return (
    <div className="relative h-[422px] overflow-hidden bg-white font-['Inter']">
      <Icon w={856} h={422} box="193 289 856 422" className="absolute left-0 top-0">
        <g stroke="#000" strokeWidth="2">
          <path d="M280 285h469v21.500l-130 .6c-80 0-130 .8-180 0l-159-.9z" fill="#c1c1c1" stroke="none" />
          <path d="M280 698c160-1.500 240-1 320-1.300 60-.2 90 1.600 149 3.800V715H280z" fill="#c1c1c1" stroke="none" />
          <path d="M280 306.200l159 .9c50 .8 120 .3 180 0l131-.7" />
          <path d="M280 698c160-1.500 240-1 320-1.300 60-.2 90 1.600 149 3.800" />
          <path d="M280 285c-.6 100 .6 200 .2 430M749.700 285c.6 130-.6 270 .3 430" strokeWidth="2.600" />
          <path d="M289.500 334h158.500v58H289.500z" />
          <path d="M293 338l151 50M444 338L293 388" stroke="#5a5a5a" strokeWidth="3" />
          <path d="M296 407.300l215 .2 215.500.3c-1.500 9 .8 18 .3 28l-211 .2-219.500.3c-2-10 .5-19-.3-29z" />
          <path d="M580.200 453c50-1 85-.6 156 .8-1.800 40 .5 80-.6 120-60 .5-100-.8-155.600-1.200.5-40-.8-80 .2-119.600z" strokeWidth="1.800" />
          <path d="M580 538.300c60-.5 100 .3 156 .7" strokeWidth="1.500" />
          <ellipse cx="594" cy="555" rx="9.500" ry="12.300" strokeWidth="1.600" />
          <path d="M591.500 549.500v12l6-6z" strokeWidth="1.400" />
          <path d="M610 550c25 .5 50 .5 77 1l-1 8.500c-25-.3-50-.3-76.500-.3z" fill="#c9c9c9" strokeWidth="1.600" />
          <path d="M694 551.500l3.500-.5 5-5.500v21l-5-5-3.500-.5c-1-3-1-7 0-9.500zM697.500 551v10.500" strokeWidth="1.600" />
          <path d="M705.500 552v6M708.500 550.500c1.300 3 1.300 6 0 8.500" strokeWidth="1.200" />
          <path d="M718.500 551.500h8v8h-8z" strokeWidth="1.600" />
          <path d="M715.500 545l3 4M731 545.500l-3.500 4M716 566.500l2-4M731 567l-3.500-4.500" strokeWidth="1.400" strokeDasharray="2.500 1" />
          <path d="M715 545.500l2.500 1M731.500 545l-2.500 1.500M715.500 567l1-2M728.500 565l3 2.500v-2.500" strokeWidth="1.500" />
        </g>
        <g stroke="none">
          <path d="M660.500 614.500l77 3.300c.8 25-1 52-2 76.700-26 .7-53-.8-78.500-3 .5-26 2.500-51 3.500-77z" fill="#f1ca4d" />
          <path d="M660.500 614.500l65 2.800c-20 22-40 35-66.500 43z" fill="#f3d36a" opacity=".7" />
          <path d="M658 668c30 5 50-12 79-10v-40h-8c-14 24-40 40-70 42z" fill="#eeca5a" opacity=".7" />
          <path d="M675 606.500l44-6.300.5 21.500-43.500 4.500z" fill="#df332b" />
          <path d="M675 606.500l44-6.300v12l-43.800 1.500z" fill="#e1534b" />
          <path d="M734 711c1-3 3.500-4 5-4l-.5 4zM742 711c0-3 2-3 3-2v2z" fill="#000" />
        </g>
      </Icon>
      <span className="absolute left-[280px] top-[44px] whitespace-nowrap text-[17.500px] leading-6 text-black">Etiquetas basicas de HTML</span>
      <div className="absolute left-[119px] top-[125px] flex whitespace-nowrap text-[12px] font-semibold leading-4 tracking-[-0.3px] text-black">
        <span className="w-[49px]">Inicio</span>
        <span className="w-[54px]">Temas</span>
        <span className="w-[70px]">Recursos</span>
        <span className="w-[83px] tracking-[-0.45px]">Aprendizaje</span>
        <span>Acerca de</span>
      </div>
      <p className="absolute left-[95px] top-[177px] whitespace-nowrap text-[12.500px] font-semibold italic leading-[15.700px] tracking-[-0.02px] text-[#8a10e0]">
        El proposito de esta pagina web es fortalecer
        <br />
        el aprendizaje de las etiquetas basicas de
        <br />
        HTML atributos y valores para lograr el
        <br />
        objetivo de aprendizaje.
      </p>
      <p className="absolute left-[162px] top-[357px] w-[200px] whitespace-nowrap text-center text-[12.500px] leading-4 tracking-[-0.15px] text-[#3a6fcf]">
        smgaravitoh.16@gmail.com
        <br />
        skype:smgaravitoh.16@gmail.com
      </p>
      <p className="absolute left-[469px] top-[340px] w-[70px] text-center text-[12.500px] leading-4 text-[#111]">
        A
        <br />
        comment
      </p>
    </div>
  );
}

function Inspector() {
  return (
    <div className="flex w-[300px] shrink-0 flex-col border-l border-[#c4c4c4] bg-[#eee] text-[#333]">
      <div className="flex h-9 items-center bg-[#c9cacb] pb-0.5 pl-4 text-[14px]">Nueva estructura alámbrica 1</div>
      <div className="px-4">
        <h2 className="mt-[8px] text-[14px] leading-5">Notas</h2>
        <p className="mt-[19px] text-[12px] italic leading-5">Haga clic aquí para editar notas.</p>
        <div className="mt-[132px] h-0.5 bg-[#c9cacb]" />
        <div className="mt-[10px] flex justify-between text-[14px] leading-5">
          <h2>Versiones alternativas</h2>
          <span>+</span>
        </div>
        <p className="mt-[9px] whitespace-nowrap text-[12px] leading-4">
          Haga clic en '+' para crear una versión
          <br />
          alternativa de esta estructura alámbrica
        </p>
      </div>
    </div>
  );
}

function Workspace() {
  return (
    <div className="flex h-[439px]">
      <Sidebar />
      <div className="flex w-[856px] shrink-0 flex-col">
        <Wireframe />
        <div className="flex h-[17px] items-center bg-[#f1f1f1]">
          <Arrow d={LEFT} className="ml-1 text-[#a3a3a3]" />
          <span className="ml-[5px] h-[13px] w-[734px] bg-[#c1c1c1]" />
          <Arrow d={RIGHT} className="ml-auto mr-[5px] text-[#505050]" />
        </div>
      </div>
      <div className="flex w-[17px] shrink-0 flex-col items-center bg-[#f1f1f1]">
        <Arrow d={UP} className="mt-[5px] text-[#505050]" />
        <span className="mt-[27px] h-[184px] w-[13px] bg-[#c1c1c1]" />
        <Arrow d={DOWN} className="mb-[5px] mt-auto text-[#505050]" />
        <span className="h-[17px] w-full bg-[#dcdcdc]" />
      </div>
      <Inspector />
    </div>
  );
}

/* ---------- Taskbar ---------- */

const OfficeIcon = ({ letter, color, kind }: { letter: string; color: string; kind: "w" | "p" | "x" }) => (
  <Icon w={22} h={22}>
    <rect x="11" y="3" width="11" height="16.500" fill="#fff" stroke="none" />
    <g stroke={color} strokeWidth="1.100">
      {kind === "w" && <path d="M13 6h8M13 8.500h8M13 11h8M13 13.500h8M13 16h8" />}
      {kind === "x" && <path d="M13 6h8M13 8.500h8M13 11h8M13 13.500h8M13 16h8M17 4v14.500" />}
      {kind === "p" && <path d="M14 5.500v4.500h5a4.500 4.500 0 11-5-4.500M17 4.500v3h3M13 14.500h7M13 17h7" />}
    </g>
    <path d="M0 2.500L13 0v22L0 19.500z" fill={color} stroke="none" />
    <text x="6.500" y="15.200" fontSize="11" fontWeight="800" textAnchor="middle" fill="#fff" stroke="none" fontFamily="Open Sans, sans-serif">
      {letter}
    </text>
  </Icon>
);

const ChromeIcon = () => (
  <Icon w={22} h={22}>
    <g stroke="none">
      <circle cx="11" cy="11" r="11" fill="#fc3" />
      <path d="M11 0a11 11 0 019.530 5.500H11a5.500 5.500 0 00-4.760 8.250L1.470 5.500A11 11 0 0111 0z" fill="#dd4b3e" />
      <path d="M1.470 5.500A11 11 0 0011 22l4.760-8.250a5.500 5.500 0 01-9.520 0z" fill="#1da260" />
      <circle cx="11" cy="11" r="5.200" fill="#fff" />
      <circle cx="11" cy="11" r="4.100" fill="#4a8af4" />
    </g>
  </Icon>
);
const FolderIcon = () => (
  <Icon w={22} h={20}>
    <g stroke="none">
      <path d="M.5 1h8l2 2h11v14.500H.5z" fill="#d9a520" />
      <path d="M.5 4.500h21v13.500H.5z" fill="#fcd667" />
      <path d="M4 18.800v-8.500h14v8.500h-3.500v-4.500h-7v4.500z" fill="#3f95cc" />
    </g>
  </Icon>
);

const apps: [ReactNode, boolean][] = [
  [<FolderIcon />, true],
  [<OfficeIcon letter="W" color="#2a5699" kind="w" />, false],
  [<OfficeIcon letter="P" color="#d24625" kind="p" />, false],
  [<OfficeIcon letter="X" color="#207245" kind="x" />, false],
  [
    <span className="flex size-[22px] items-center justify-center rounded-full bg-[radial-gradient(circle,#fff_55%,transparent_56%)] text-[#12a9e8]">
      <FaSkype size={24} className="shrink-0" />
    </span>,
    true,
  ],
  [<FaEdgeLegacy size={21} color="#0b7bdc" />, true],
  [<VscVscode size={24} color="#2496e0" />, true],
];

function Taskbar() {
  return (
    <div className="flex h-10 bg-linear-to-r from-[#29281f] from-20% via-[#1e2c38] via-40% to-[#262621] to-80% text-white">
      <div className="flex w-[51px] items-center pl-4">
        <Icon w={16} h={16} className="text-white">
          <path d="M0 2.300L6.500 1.400v6H0zM7.500 1.200L16 0v7.400H7.500zM0 8.500h6.500v6.100L0 13.700zM7.500 8.500H16V16l-8.500-1.200z" fill="currentColor" stroke="none" />
        </Icon>
      </div>
      <div className="mr-1 flex h-10 w-[47px] flex-col border-r border-[#7a796f] bg-[#56554c]">
        <span className="flex h-[38px] items-center pl-[13px] pt-0.5"><ChromeIcon /></span>
        <span className="h-0.5 w-[44px] bg-[#a8dcf8]" />
      </div>
      {apps.map(([icon, open], i) => (
        <div key={i} className={`flex h-10 w-[49px] flex-col items-center pr-[1px] ${i === 0 ? "-ml-0.5" : ""}`}>
          <span className="flex h-[38px] items-center pt-0.5">{icon}</span>
          {open && <span className="h-0.5 w-10 bg-[#a8dcf8]" />}
        </div>
      ))}
      <div className="ml-auto flex h-10 items-center text-[12px]">
        <Icon w={12} h={7}>
          <path d="M.7 6.300L6 1l5.300 5.300" />
        </Icon>
        <Icon w={16} h={12} className="ml-[11px] mt-1">
          <path d="M.6 1.600h12.800v7.300H.6zM14.500 3.500v3" strokeWidth="1.200" />
          <path d="M2.500 3.500h1.500v3.500H2.500z" fill="#fff" stroke="none" />
          <circle cx="10.500" cy="7.300" r="4.500" fill="#15994b" stroke="none" />
          <path d="M10.500 4.500l2 3h-1.200v2.300H9.700V7.500H8.500z" fill="#e9f7ee" stroke="none" />
        </Icon>
        <Icon w={14} h={14} className="ml-[10px] mt-0.5">
          <path d="M1.500 12.500C1.500 6.500 6 1.800 12.500 1.500M4.500 12.800C4.500 8.500 8 5 12.500 4.800M7.500 12.800c0-2.500 2.300-4.700 5-4.800" strokeWidth="1.200" />
          <circle cx="11.700" cy="12" r="1.500" fill="#fff" stroke="none" />
        </Icon>
        <Icon w={17} h={14} className="ml-[7px]">
          <path d="M.6 4.700h2.500l3.500-3.500v11.600L3.100 9.300H.6z" strokeWidth="1.100" />
          <path d="M9 5c.8 1.300.8 2.700 0 4M11.200 3.300c1.800 2.400 1.800 5 0 7.400" strokeWidth="1.100" />
          <path d="M13.400 1.500c2.800 3.500 2.800 7.500 0 11" stroke="#999" strokeWidth="1.100" />
        </Icon>
        <span className="ml-[11px] w-[19px] whitespace-nowrap tracking-[-0.8px]">ESP</span>
        <div className="ml-[14px] w-[60px] whitespace-nowrap text-center text-[12px] leading-[18px] tracking-[-0.5px]">
          1:22 a. m.
          <br />
          29/09/2021
        </div>
        <Icon w={25} h={26} className="ml-[16px] mt-1">
          <path d="M1 1h15v12.500H9L5.500 17v-3.500H1z" fill="#fff" stroke="none" />
          <path d="M3 4h11M3 7h11M3 10h6" stroke="#2a2a23" />
          <circle cx="16.500" cy="16.500" r="7.800" fill="#3b3b36" stroke="#85857f" />
          <text x="16.500" y="20.500" fontSize="11" fontWeight="600" textAnchor="middle" fill="#fff" stroke="none">1</text>
        </Icon>
        <span className="ml-[11px] mr-1 h-10 w-px bg-[#57574f]" />
      </div>
    </div>
  );
}

export default function App() {
  return (
    <div className="h-[768px] w-[1366px] overflow-hidden bg-white font-['Open_Sans','Noto_Sans',sans-serif]">
      <TabStrip />
      <AddressBar />
      <Bookmarks />
      <AppHeader />
      <Categories />
      <Controls />
      <div className="flex h-[17px] items-start border-b border-[#c4c4c4] bg-[#f1f1f1] pt-[1px]">
        <Arrow d={LEFT} className="ml-1 mt-[3px] text-[#505050]" />
        <span className="ml-[385px] h-[13px] w-[952px] bg-[#c1c1c1]" />
        <Arrow d={RIGHT} className="ml-[6px] mt-[3px] text-[#a3a3a3]" />
      </div>
      <Workspace />
      <Taskbar />
    </div>
  );
}
